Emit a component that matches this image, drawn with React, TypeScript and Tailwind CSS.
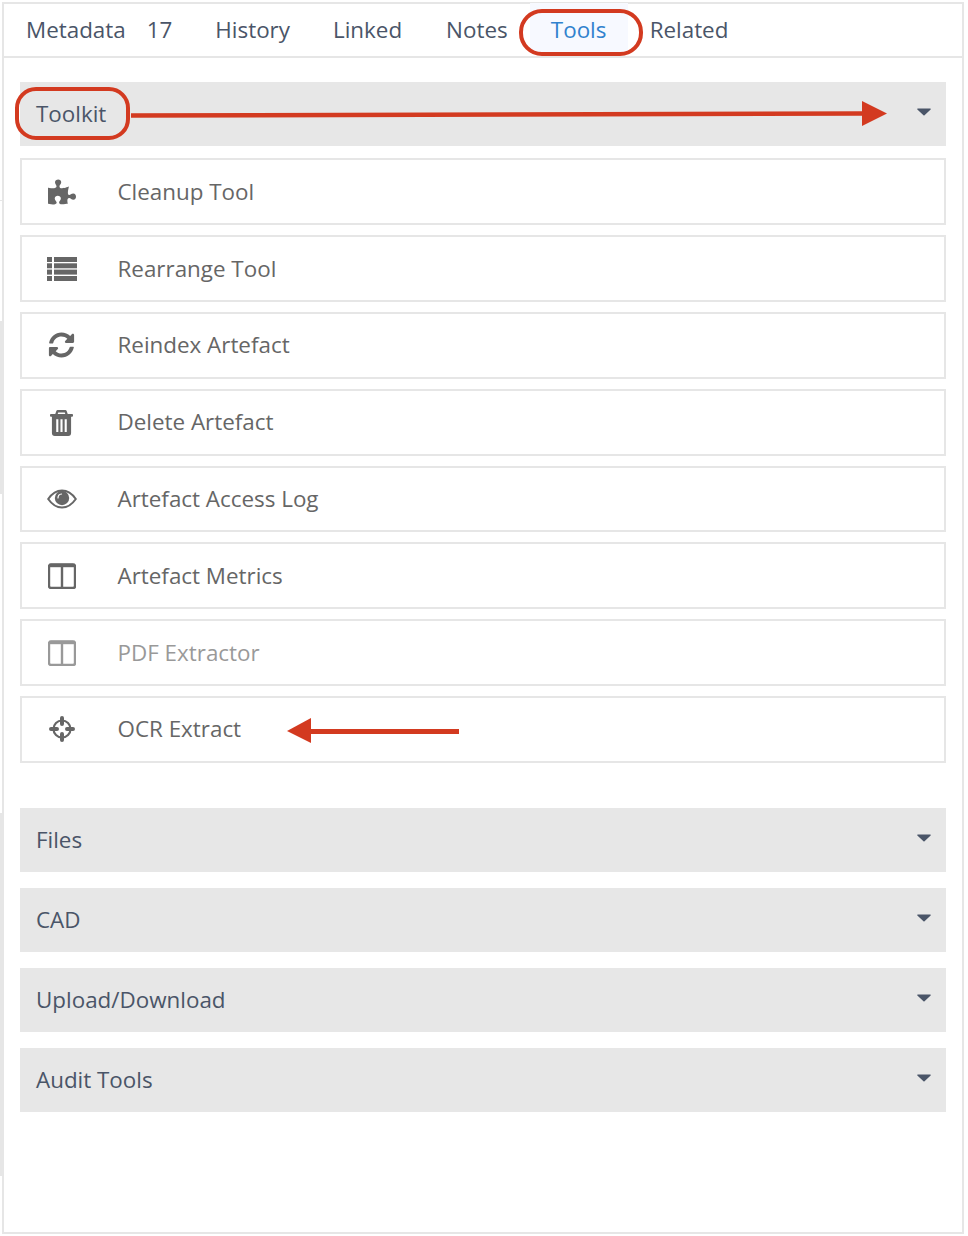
import React from 'react';
import { FaPuzzlePiece, FaSyncAlt } from 'react-icons/fa';

const ListIcon = ({ className }: { className?: string }) => (
  <svg className={className} viewBox="0 0 30 24" fill="currentColor">
    <rect x="0" y="0" width="5" height="5" />
    <rect x="7" y="0" width="23" height="5" />
    <rect x="0" y="6.300" width="5" height="5" />
    <rect x="7" y="6.300" width="23" height="5" />
    <rect x="0" y="12.600" width="5" height="5" />
    <rect x="7" y="12.600" width="23" height="5" />
    <rect x="0" y="19" width="5" height="5" />
    <rect x="7" y="19" width="23" height="5" />
  </svg>
);

const TrashIcon = ({ className }: { className?: string }) => (
  <svg className={className} viewBox="0 0 24 28" fill="currentColor">
    <path d="M8 1h8a1.500 1.500 0 0 1 1.400 1L18.500 5H23a1 1 0 0 1 1 1v1a1 1 0 0 1-1 1h-1v17a3 3 0 0 1-3 3H5a3 3 0 0 1-3-3V8H1a1 1 0 0 1-1-1V6a1 1 0 0 1 1-1h4.500L6.600 2A1.500 1.500 0 0 1 8 1zm.6 2.500L8 5h8l-.6-1.500zM6.500 10.500v13.500h2.200V10.500zm4.400 0v13.500h2.200V10.500zm4.400 0v13.500h2.200V10.500z" fillRule="evenodd" />
  </svg>
);

const EyeIcon = ({ className }: { className?: string }) => (
  <svg className={className} viewBox="0 0 30 20">
    <path d="M1.200 10C5 4.500 9.500 1.500 15 1.500S25 4.500 28.800 10C25 15.500 20.500 18.500 15 18.500S5 15.500 1.200 10z" fill="none" stroke="currentColor" strokeWidth="2" />
    <circle cx="15" cy="9" r="7.200" fill="currentColor" />
    <path d="M11 9c0-2.200 1.500-3.800 3.500-4" fill="none" stroke="#ffffff" strokeWidth="1.200" strokeLinecap="round" />
  </svg>
);

const ColumnsIcon = ({ className }: { className?: string }) => (
  <svg className={className} viewBox="0 0 28 26" fill="none" stroke="currentColor">
    <rect x="1" y="1.500" width="26" height="23.500" rx="2" strokeWidth="2.400" />
    <path d="M1 2.500h26" strokeWidth="3.400" />
    <path d="M14 3v22" strokeWidth="2.400" />
  </svg>
);

const CrosshairIcon = ({ className }: { className?: string }) => (
  <svg className={className} viewBox="0 0 26 26" fill="none" stroke="currentColor">
    <circle cx="13" cy="13" r="8.500" strokeWidth="2.200" />
    <path d="M13 2v6M13 18v6M2 13h6M18 13h6" strokeWidth="4" strokeLinecap="round" />
  </svg>
);

const Caret = () => (
  <svg className="w-[14px] h-[8px] -mt-[4px]" viewBox="0 0 16 10" fill="currentColor" preserveAspectRatio="none">
    <path d="M1 0.500h14a.8.8 0 0 1 .6 1.300L8.600 9a.8.8 0 0 1-1.200 0L.4 1.800A.8.8 0 0 1 1 .5z" />
  </svg>
);

const tabs = [
  { label: 'Metadata', cls: 'ml-[22px]' },
  { label: '17', cls: 'ml-[21px]' },
  { label: 'History', cls: 'ml-[43px]' },
  { label: 'Linked', cls: 'ml-[43px]' },
  { label: 'Notes', cls: 'ml-[44px]' },
];

const tools = [
  { label: 'Cleanup Tool', icon: <FaPuzzlePiece className="w-[28px] h-[28px]" /> },
  { label: 'Rearrange Tool', icon: <ListIcon className="w-[30px] h-[24px]" /> },
  { label: 'Reindex Artefact', icon: <FaSyncAlt className="w-[27px] h-[26px]" /> },
  { label: 'Delete Artefact', icon: <TrashIcon className="w-[23px] h-[27px]" /> },
  { label: 'Artefact Access Log', icon: <EyeIcon className="w-[30px] h-[20px]" /> },
  { label: 'Artefact Metrics', icon: <ColumnsIcon className="w-[28px] h-[26px]" /> },
  { label: 'PDF Extractor', icon: <ColumnsIcon className="w-[28px] h-[26px]" />, disabled: true },
  { label: 'OCR Extract', icon: <CrosshairIcon className="w-[26px] h-[26px]" /> },
];

function AccordionHeader({ title }: { title: string }) {
  return (
    <div className="h-[64px] bg-[#e7e7e7] flex items-center justify-between pl-[16px] pr-[15px] text-[#4a5568]">
      <span>{title}</span>
      <Caret />
    </div>
  );
}

export default function App() {
  return (
    <div className="relative w-[968px] h-[1236px] bg-white pl-[2px] pt-[2px] text-[22.400px] leading-[32px] font-['Open_Sans',sans-serif] overflow-hidden">
      {/* Slivers of the page behind the panel, left edge */}
      <div className="absolute left-0 top-[200px] w-[2px] h-[1px] bg-[#e6e6e6]" />
      <div className="absolute left-0 top-[321px] w-[2px] h-[173px] bg-[#e6e6e6]" />
      <div className="absolute left-0 top-[813px] w-[2px] h-[363px] bg-[#e6e6e6]" />

      <div className="w-[962px] h-[1232px] border-2 border-[#e6e6e6]">
        {/* Tab bar */}
        <div className="flex h-[54px] border-b-2 border-[#e6e6e6] text-[#4a5568]">
          {tabs.map(t => (
            <span key={t.label} className={`${t.cls} pt-[10px]`}>{t.label}</span>
          ))}
          <span className="ml-[22px] w-[98px] h-[49px] -mt-[1px] pt-[11px] bg-[#f7f9ff] text-center text-[#3182ce]">Tools</span>
          <span className="ml-[22px] pt-[10px]">Related</span>
        </div>

        <div className="pt-[24px] pl-[16px] pr-[16px]">
          <AccordionHeader title="Toolkit" />

          <div className="mt-[12.400px] flex flex-col gap-[10px]">
            {tools.map(t => (
              <div
                key={t.label}
                className={`h-[66.800px] border-2 border-[#e6e6e6] flex items-center ${t.disabled ? 'text-[#999999]' : 'text-[#666666]'}`}
              >
                <span className="w-[79px] flex justify-center shrink-0">{t.icon}</span>
                <span className="ml-[16.500px]">{t.label}</span>
              </div>
            ))}
          </div>

          <div className="mt-[45.200px] flex flex-col gap-[16px]">
            {['Files', 'CAD', 'Upload/Download', 'Audit Tools'].map(title => (
              <AccordionHeader key={title} title={title} />
            ))}
          </div>
        </div>
      </div>

      {/* Red annotations laid over the screenshot */}
      <div className="absolute left-[519px] top-[9px] w-[124px] h-[47px] rounded-[23px] border-4 border-[#d33a20]" />
      <div className="absolute left-[15px] top-[87px] w-[115px] h-[53px] rounded-[21px] border-4 border-[#d33a20]" />
      <svg className="absolute left-0 top-0 pointer-events-none" width="968" height="1236">
        <path d="M131 115.500L863 113.500" stroke="#d33a20" strokeWidth="4.500" />
        <path d="M862 101l25 12.500l-25 12.500z" fill="#d33a20" />
        <path d="M459 731.500H310" stroke="#d33a20" strokeWidth="5" />
        <path d="M287 731l24-13v25z" fill="#d33a20" />
      </svg>
    </div>
  );
}
